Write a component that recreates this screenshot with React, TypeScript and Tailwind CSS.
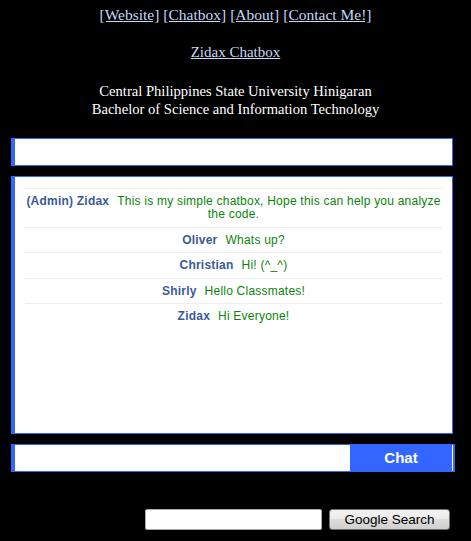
const NAV_LINKS = ["[Website]", "[Chatbox]", "[About]", "[Contact Me!]"];

const MESSAGES = [
  { name: "(Admin) Zidax", text: "This is my simple chatbox, Hope this can help you analyze the code." },
  { name: "Oliver", text: "Whats up?" },
  { name: "Christian", text: "Hi! (^_^)" },
  { name: "Shirly", text: "Hello Classmates!" },
  { name: "Zidax", text: "Hi Everyone!" },
];

export default function App() {
  return (
    <div className="min-h-[541px] w-[471px] bg-black pt-[6px]">
      <header className="text-center text-[14.6px] leading-[18px] text-white font-['Liberation_Serif',serif]">
        <nav className="flex justify-center gap-[4px] text-[15.5px]">
          {NAV_LINKS.map((label) => (
            <a key={label} href="#" className="text-[#c9d7f2] underline">
              {label}
            </a>
          ))}
        </nav>
        <div className="mt-[19px] text-[15px]">
          <a href="#" className="text-[#c9d7f2] underline">
            Zidax Chatbox
          </a>
        </div>
        <div className="mt-[21px]">
          <p>Central Philippines State University Hinigaran</p>
          <p>Bachelor of Science and Information Technology</p>
        </div>
      </header>

      <div className="ml-[11px] mt-[20px] h-[28px] w-[442px] border border-l-4 border-[#3366ff] bg-white" />

      <div className="ml-[11px] mt-[10px] h-[258px] w-[442px] border border-l-4 border-[#3366ff] bg-white px-[10px] pt-[11px] font-['Liberation_Sans',Arial,sans-serif] text-[12px] leading-[13px] tracking-[0.22px]">
        {MESSAGES.map((m, i) => (
          <div key={i} className="border-t border-[#eeeeee] pt-[6px] pb-[5.5px] text-center">
            <b className="text-[#3b5998]">{m.name}</b>
            <span className="ml-[8px] text-[#0a850a]">{m.text}</span>
          </div>
        ))}
      </div>

      <div className="ml-[11px] mt-[10px] flex h-[28px] w-[444px] border-y border-l-4 border-r-2 border-[#3366ff] bg-white">
        <input className="h-full flex-1 bg-white outline-none" />
        <button className="h-full w-[103px] border-r border-white bg-[#3366ff] font-['Liberation_Sans',Arial,sans-serif] text-[15px] font-bold text-white">
          Chat
        </button>
      </div>

      <div className="mt-[37px] flex items-center justify-end gap-[7px] pr-[21px] font-['Liberation_Sans',Arial,sans-serif]">
        <input className="h-[21px] w-[177px] rounded-[2px] border border-[#a9a9a9] bg-white outline-none" />
        <button className="h-[21px] w-[121px] rounded-[3px] border border-[#707070] bg-[linear-gradient(#f2f2f2,#ebebeb_50%,#dddddd_50%,#cfcfcf)] text-[13.5px] leading-[19px] text-black">
          Google Search
        </button>
      </div>
    </div>
  );
}
